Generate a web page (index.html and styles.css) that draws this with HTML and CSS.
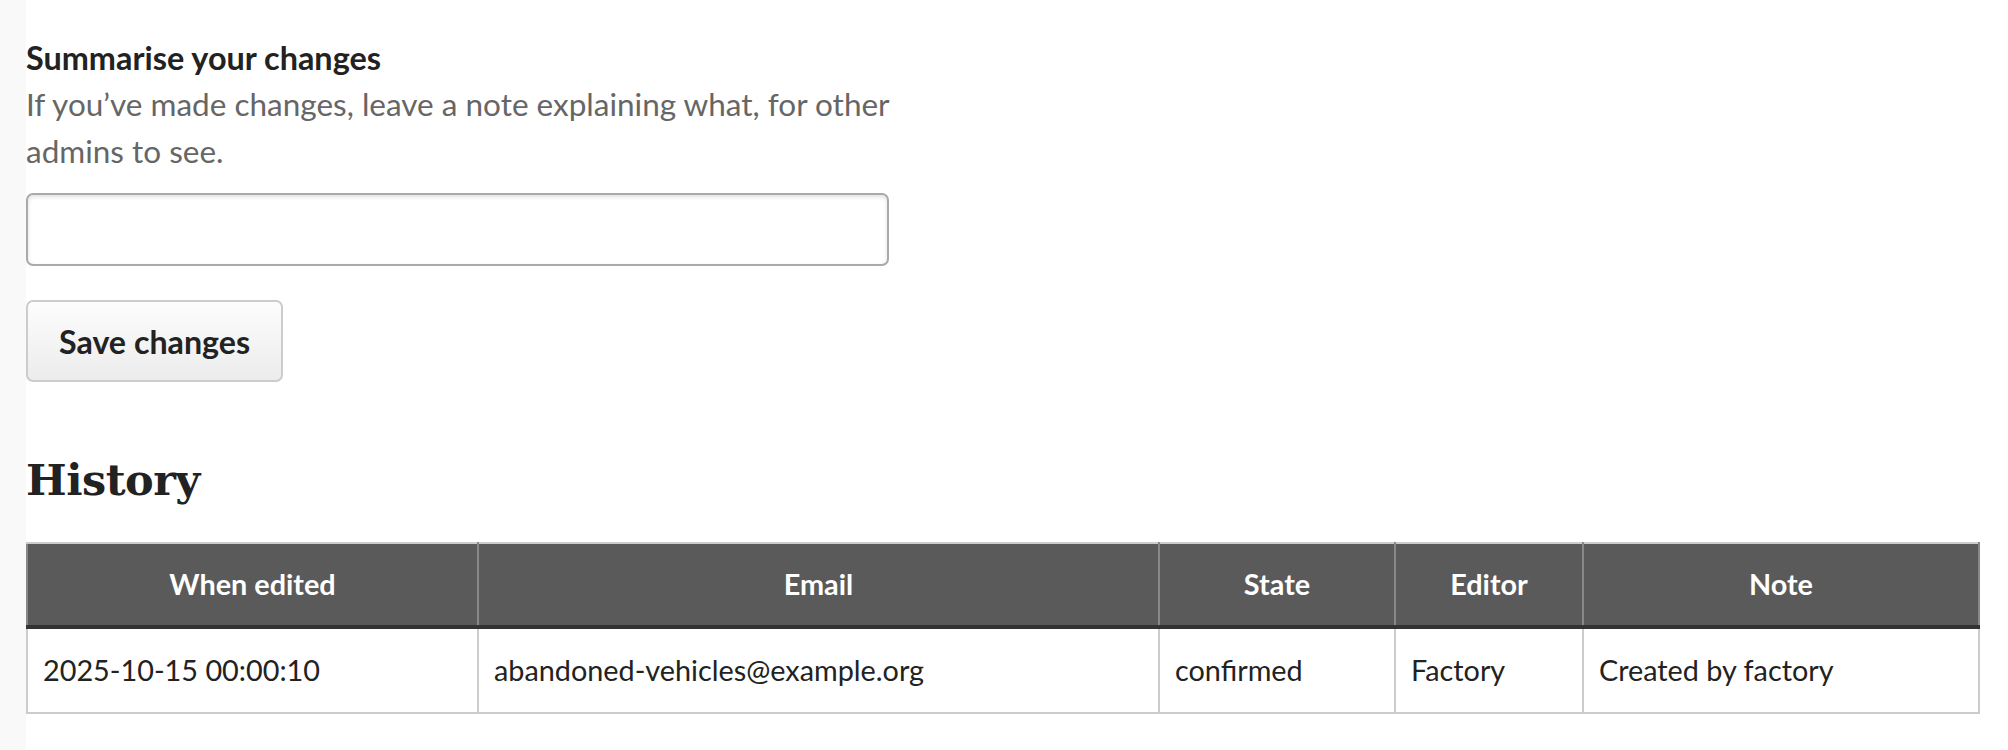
FILE: index.html
```html
<!DOCTYPE html>
<html lang="en">
<head>
<meta charset="utf-8">
<title>Admin – History</title>
<link rel="stylesheet" href="styles.css">
</head>
<body>
<div class="page">
  <div class="side-strip"></div>
  <main class="content">
    <form class="summary-form">
      <label class="field-label" for="note">Summarise your changes</label>
      <p class="field-hint">If you’ve made changes, leave a note explaining what, for other admins to see.</p>
      <input class="text-input" id="note" type="text">
      <button class="btn" type="button">Save changes</button>
    </form>

    <h2 class="section-title">History</h2>

    <table class="history">
      <colgroup>
        <col class="c-when">
        <col class="c-email">
        <col class="c-state">
        <col class="c-editor">
        <col class="c-note">
      </colgroup>
      <thead>
        <tr>
          <th>When edited</th>
          <th>Email</th>
          <th>State</th>
          <th>Editor</th>
          <th>Note</th>
        </tr>
      </thead>
      <tbody>
        <tr>
          <td>2025-10-15 00:00:10</td>
          <td>abandoned-vehicles@example.org</td>
          <td>confirmed</td>
          <td>Factory</td>
          <td>Created by factory</td>
        </tr>
      </tbody>
    </table>
  </main>
</div>
</body>
</html>
```

FILE: styles.css
```css
* { box-sizing: border-box; }

html, body {
  margin: 0;
  padding: 0;
  background: #ffffff;
}

body {
  font-family: Lato, "Open Sans", sans-serif;
  font-size: 28.8px;
  line-height: 47px;
  color: #222222;
}

.page {
  display: flex;
  min-height: 750px;
}

.side-strip {
  flex: 0 0 26px;
  background: #f9f9f9;
}

.content {
  flex: 1;
  padding: 34px 30px 0 0;
  background: #ffffff;
}

.summary-form {
  display: flex;
  flex-direction: column;
  align-items: flex-start;
  width: 863px;
}

.field-label {
  display: block;
  font-size: 32.4px;
  font-weight: 700;
  color: #222222;
}

.field-hint {
  margin: 0;
  font-size: 31.5px;
  color: #666666;
}

.text-input {
  margin-top: 18px;
  width: 863px;
  height: 73px;
  border: 2px solid #aaaaaa;
  border-radius: 7px;
  background: #ffffff;
  box-shadow: inset 0 2px 4px rgba(0, 0, 0, 0.12);
  font: inherit;
  padding: 0 14px;
}

.btn {
  margin-top: 34px;
  height: 82px;
  padding: 0 31px;
  border: 2px solid #cccccc;
  border-radius: 7px;
  background: linear-gradient(to bottom, #fdfdfd, #ececec);
  font-family: Lato, sans-serif;
  font-size: 32.2px;
  font-weight: 700;
  color: #222222;
  line-height: 47px;
}

.section-title {
  margin: 73px 0 37px;
  font-family: "DejaVu Serif", "Liberation Serif", serif;
  font-weight: 700;
  font-size: 43px;
  line-height: 50px;
  color: #222222;
  letter-spacing: -0.5px;
}

.history {
  width: 1952px;
  table-layout: fixed;
  border-collapse: collapse;
  border: 2px solid #cccccc;
}

.c-when { width: 451px; }
.c-email { width: 681px; }
.c-state { width: 236px; }
.c-editor { width: 188px; }
.c-note { width: 396px; }

.history th {
  background: #5a5a5a;
  color: #ffffff;
  font-weight: 700;
  text-align: center;
  padding: 17px 15px;
  border-top: 2px solid #cccccc;
  border-left: 2px solid #888888;
  border-right: 2px solid #888888;
  border-bottom: 4px solid #333333;
}

.history td {
  text-align: left;
  padding: 18px 15px;
  border: 2px solid #cccccc;
  color: #222222;
  white-space: nowrap;
}
```
